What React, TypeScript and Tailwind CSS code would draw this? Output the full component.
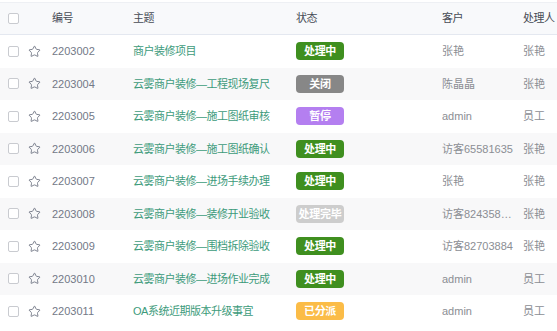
import { Star } from "lucide-react";

type Row = {
  id: string;
  subject: string;
  status: string;
  customer: string;
  handler: string;
};

const rows: Row[] = [
  { id: "2203002", subject: "商户装修项目", status: "处理中", customer: "张艳", handler: "张艳" },
  { id: "2203004", subject: "云雾商户装修—工程现场复尺", status: "关闭", customer: "陈晶晶", handler: "张艳" },
  { id: "2203005", subject: "云雾商户装修—施工图纸审核", status: "暂停", customer: "admin", handler: "员工" },
  { id: "2203006", subject: "云雾商户装修—施工图纸确认", status: "处理中", customer: "访客65581635", handler: "张艳" },
  { id: "2203007", subject: "云雾商户装修—进场手续办理", status: "处理中", customer: "张艳", handler: "张艳" },
  { id: "2203008", subject: "云雾商户装修—装修开业验收", status: "处理完毕", customer: "访客8243583671", handler: "张艳" },
  { id: "2203009", subject: "云雾商户装修—围档拆除验收", status: "处理中", customer: "访客82703884", handler: "张艳" },
  { id: "2203010", subject: "云雾商户装修—进场作业完成", status: "处理中", customer: "admin", handler: "员工" },
  { id: "2203011", subject: "OA系统近期版本升级事宜", status: "已分派", customer: "admin", handler: "员工" },
];

const badgeColor: Record<string, string> = {
  处理中: "bg-[#3f8f1f]",
  关闭: "bg-[#878787]",
  暂停: "bg-[#b47ff0]",
  处理完毕: "bg-[#cdcdcd]",
  已分派: "bg-[#fbbc47]",
};

const cols = "grid grid-cols-[26px_26px_81px_163px_146px_81px_1fr] items-center";

function Checkbox() {
  return <div className="ml-[8px] h-[11px] w-[11px] rounded-[2px] border border-[#c9cbd0] bg-white" />;
}

export default function App() {
  return (
    <div
      className="h-[331px] w-[557px] overflow-hidden bg-white pt-[2px] text-[11px]"
      style={{ fontFamily: '"Liberation Sans", "Noto Sans CJK SC", sans-serif' }}
    >
      <div className={`${cols} h-[33px] border-y border-t-[#eef0f4] border-b-[#e4e8f0] bg-[#f8f9fb] text-[#474c56]`}>
        <Checkbox />
        <div />
        <div className="tracking-[-0.5px]">编号</div>
        <div className="tracking-[-0.5px]">主题</div>
        <div className="tracking-[-0.5px]">状态</div>
        <div className="tracking-[-0.5px]">客户</div>
        <div className="whitespace-nowrap tracking-[-0.5px]">处理人</div>
      </div>

      {rows.map((r, i) => (
        <div key={r.id} className={`${cols} h-[32.5px] ${i % 2 === 1 ? "bg-[#f8f8f9]" : "bg-white"}`}>
          <Checkbox />
          <div className="pl-[2px]">
            <Star size={13} strokeWidth={1.6} className="text-[#6b7180]" />
          </div>
          <div className="text-[#737987]">{r.id}</div>
          <div className="whitespace-nowrap tracking-[-0.5px] text-[#3d9b7b]">{r.subject}</div>
          <div>
            <span
              className={`flex h-[18px] w-[48px] items-center justify-center rounded-[4px] font-bold tracking-[-0.3px] text-white ${badgeColor[r.status]}`}
            >
              {r.status}
            </span>
          </div>
          <div className="min-w-0 overflow-hidden pr-[7px]">
            <div className="truncate text-[#8b8e94]">{r.customer}</div>
          </div>
          <div className="whitespace-nowrap text-[#8b8e94]">{r.handler}</div>
        </div>
      ))}
    </div>
  );
}
